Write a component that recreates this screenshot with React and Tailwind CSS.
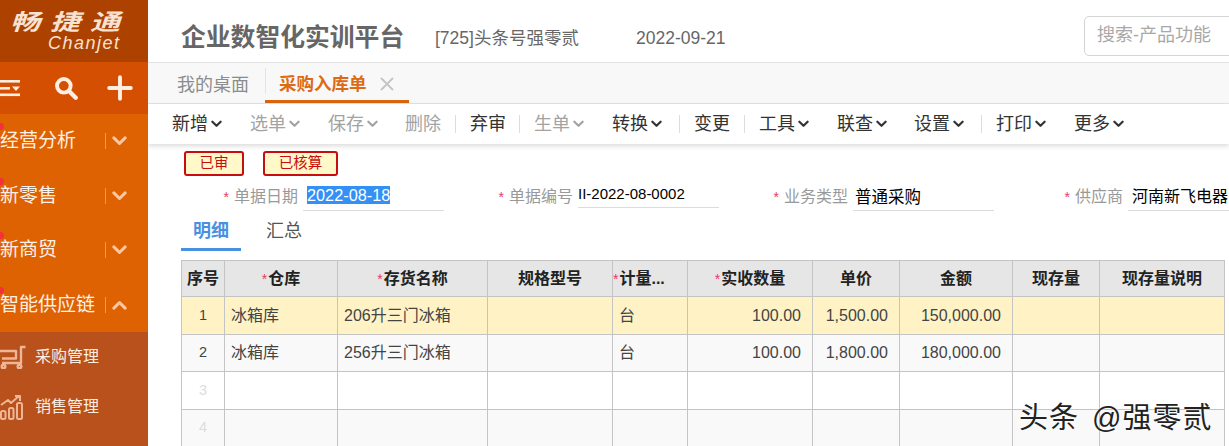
import React from "react";

const cjk = { fontFamily: '"Liberation Sans","Noto Sans CJK SC",sans-serif' };

const Chevron = ({ up, className = "" }) => (
  <svg viewBox="0 0 12 8" className={className} fill="none" stroke="currentColor" strokeWidth="2.4" strokeLinecap="round" strokeLinejoin="round">
    <path d={up ? "M1.5 6.5 6 2l4.5 4.5" : "M1.5 1.5 6 6l4.5-4.5"} />
  </svg>
);

const menu = ["经营分析", "新零售", "新商贸", "智能供应链"];

function Sidebar() {
  return (
    <aside className="w-[148px] h-[446px] shrink-0 overflow-hidden text-white">
      <div className="h-[62px] bg-[#ad4100] flex flex-col items-start pl-[10px] pt-[9px]">
        <div className="text-[30px] leading-[27px] font-bold italic text-[#f8e2d2] tracking-[10px] whitespace-nowrap scale-y-[0.75]">畅捷通</div>
        <div className="ml-[38px] text-[18px] leading-[15px] italic text-[#f8e2d2] tracking-[1.500px]" style={{ fontFamily: '"Liberation Sans",sans-serif' }}>Chanjet</div>
      </div>
      <div className="h-[52px] bg-[#d54f02] flex items-center">
        <svg viewBox="0 0 24 18" className="w-[24px] h-[18px] ml-[-2px] text-[#fdeee2]" fill="currentColor">
          <rect x="0" y="1" width="22" height="2.6" />
          <rect x="0" y="8" width="12" height="2.6" />
          <path d="M14 7.500h8l-4 4.500z" />
          <rect x="0" y="14.500" width="22" height="2.600" />
        </svg>
        <svg viewBox="0 0 24 24" className="w-[26px] h-[26px] ml-[31px] text-[#fdeee2]" fill="none" stroke="currentColor" strokeLinecap="round">
          <circle cx="10" cy="10" r="6.300" strokeWidth="3.600" />
          <path d="M15 15l6 6" strokeWidth="4" />
        </svg>
        <svg viewBox="0 0 24 24" className="w-[26px] h-[26px] ml-[28px] text-[#fdeee2]" fill="none" stroke="currentColor" strokeWidth="3.600" strokeLinecap="round">
          <path d="M12 2v20M2 12h20" />
        </svg>
      </div>
      <div className="bg-[#df6202]">
        {menu.map((m, i) => (
          <div key={m} className="h-[54.500px] flex items-center relative">
            <span className="absolute left-[-3px] top-[9px] w-[7px] h-[7px] rounded-full bg-[#f5303a]" />
            <span className="text-[19px] whitespace-nowrap w-[105px] text-[#fdf0e6]">{m}</span>
            <span className="h-[16px] w-px bg-[#ec9a5c]" />
            <Chevron up={i === 3} className="w-[15px] h-[10px] ml-[6px] text-[#f7c8a3]" />
          </div>
        ))}
      </div>
      <div className="bg-[#b8511c] h-[114px]">
        <div className="h-[50px] flex items-center">
          <svg viewBox="0 0 26 24" className="w-[26px] h-[24px] text-[#eeb597]" fill="none" stroke="currentColor" strokeWidth="2.400" strokeLinejoin="round">
            <path d="M25.500 2h-4.500v16H2" />
            <path d="M0 6h16v7.500H2" />
            <circle cx="3.500" cy="21.500" r="1.800" />
            <circle cx="19.500" cy="21.500" r="1.800" />
          </svg>
          <span className="ml-[9px] text-[16px] text-[#fdeee2] whitespace-nowrap">采购管理</span>
        </div>
        <div className="h-[50px] flex items-center">
          <svg viewBox="0 0 26 26" className="w-[26px] h-[26px] ml-[-1px] text-[#eeb597]" fill="none" stroke="currentColor" strokeWidth="2" strokeLinejoin="round">
            <rect x="2" y="17" width="4.500" height="8" rx="1.500" />
            <rect x="10" y="14" width="4.500" height="11" rx="1.500" />
            <rect x="18" y="9" width="5" height="16" rx="1.500" />
            <path d="M2 11l7-5 3 3 8-7M16 2h5v5" />
          </svg>
          <span className="ml-[10px] text-[16px] text-[#fdeee2] whitespace-nowrap">销售管理</span>
        </div>
      </div>
    </aside>
  );
}

const tools = [
  { t: "新增", c: 1, w: 78 },
  { t: "选单", c: 1, g: 1, w: 78 },
  { t: "保存", c: 1, g: 1, w: 77 },
  { t: "删除", g: 1, s: 1, w: 65 },
  { t: "弃审", s: 1, w: 64 },
  { t: "生单", c: 1, g: 1, w: 78 },
  { t: "转换", c: 1, s: 1, w: 82 },
  { t: "变更", s: 1, w: 65 },
  { t: "工具", c: 1, w: 78 },
  { t: "联查", c: 1, w: 77 },
  { t: "设置", c: 1, s: 1, w: 82 },
  { t: "打印", c: 1, w: 78 },
  { t: "更多", c: 1, w: 60 },
];

function Toolbar() {
  return (
    <div className="h-[40px] bg-white flex items-center pl-[24px] shadow-[0_2px_5px_rgba(0,0,0,0.15)] relative">
      {tools.map((x) => (
        <div key={x.t} className="flex items-center shrink-0 relative" style={{ width: x.w }}>
          <span className={`text-[18px] whitespace-nowrap ${x.g ? "text-[#a3a3a3]" : "text-[#333333]"}`}>{x.t}</span>
          {x.c && <Chevron className={`w-[11px] h-[8px] ml-[3px] ${x.g ? "text-[#a3a3a3]" : "text-[#333333]"}`} />}
          {x.s && <span className="absolute right-[14px] h-[18px] w-px bg-[#dddddd]" />}
        </div>
      ))}
    </div>
  );
}

const Field = ({ label, value, labelW, pl = 0, pt = 2, h = 30, size, selected }) => (
  <div className="flex items-start shrink-0">
    <div className="text-right text-[16px] text-[#999999] whitespace-nowrap pr-[5px] leading-[26px] pt-[3px]" style={{ width: labelW }}>
      <span className="text-[#e8386a] text-[14px] mr-[5px]">*</span>{label}
    </div>
    <div className="w-[141px] border-b border-[#dcdcdc] overflow-hidden whitespace-nowrap text-black leading-[24px]" style={{ height: h, paddingLeft: pl, paddingTop: pt, fontSize: size }}>
      {selected ? <span className="bg-[#3390f4] text-white">{value}</span> : value}
    </div>
  </div>
);

const cols = [43, 113, 150, 125, 75, 125, 87, 113, 87, 125];
const heads = [
  ["序号"], ["仓库", 1], ["存货名称", 1], ["规格型号"], ["计量...", 1], ["实收数量", 1], ["单价"], ["金额"], ["现存量"], ["现存量说明"],
];
const rows = [
  { n: "1", bg: "bg-[#fff3c6]", c: ["冰箱库", "206升三门冰箱", "", "台", "100.00", "1,500.00", "150,000.00", "", ""], h: "h-[38px]" },
  { n: "2", bg: "bg-[#f9f9f9]", c: ["冰箱库", "256升三门冰箱", "", "台", "100.00", "1,800.00", "180,000.00", "", ""], h: "h-[37px]" },
  { n: "3", bg: "bg-white", c: ["", "", "", "", "", "", "", "", ""], h: "h-[38px]", mute: 1 },
  { n: "4", bg: "bg-[#f9f9f9]", c: ["", "", "", "", "", "", "", "", ""], h: "h-[37px]", mute: 1 },
];

function DataTable() {
  return (
    <table className="table-fixed border-collapse ml-[33px] mt-[9px] w-[1043px] text-[16px]">
      <colgroup>
        {cols.map((w, i) => <col key={i} style={{ width: w }} />)}
      </colgroup>
      <thead>
        <tr className="h-[36px] bg-[#e6e6e6]">
          {heads.map(([h, req], i) => (
            <th key={i} className={`border border-[#c4c4c4] font-bold text-[#222222] whitespace-nowrap p-0 ${i === 4 ? "text-left" : "text-center"}`}>
              {req && <span className="text-[#e8386a] font-normal text-[14px] mr-[1px]">*</span>}{h}
            </th>
          ))}
        </tr>
      </thead>
      <tbody>
        {rows.map((r) => (
          <tr key={r.n} className={`${r.h} ${r.bg}`}>
            <td className={`border border-[#c4c4c4] text-center p-0 text-[14.500px] ${r.mute ? "text-[#dddddd]" : "text-[#444444]"}`}>{r.n}</td>
            {r.c.map((v, i) => (
              <td key={i} className={`border border-[#c4c4c4] text-[#444444] whitespace-nowrap py-0 ${i >= 4 ? "text-right pr-[11px] pl-0" : "pl-[6px] pr-0"}`}>{v}</td>
            ))}
          </tr>
        ))}
      </tbody>
    </table>
  );
}

export default function App() {
  return (
    <div className="w-[1229px] h-[446px] overflow-hidden flex bg-white relative" style={cjk}>
      <Sidebar />
      <main className="flex-1 min-w-0 overflow-hidden">
        <header className="h-[63px] pt-[14px] flex items-center border-b border-[#e2e2e2] relative">
          <h1 className="ml-[33px] text-[24.800px] font-bold text-[#666666] whitespace-nowrap w-[254px]">企业数智化实训平台</h1>
          <span className="text-[17.500px] text-[#666666] whitespace-nowrap w-[201px]">[725]头条号强零贰</span>
          <span className="text-[17.500px] text-[#666666] whitespace-nowrap">2022-09-21</span>
          <div className="ml-auto -mr-[40px] mb-[5px] w-[185px] h-[40px] border border-[#d4d4d4] rounded-[5px] flex items-center pl-[12px] text-[18px] text-[#a8a8a8] whitespace-nowrap">搜索-产品功能</div>
        </header>
        <div className="h-[41px] bg-[#f8f8f8] border-b border-[#e4e4e4] flex items-end pl-[29px]">
          <span className="h-[40px] w-[88px] text-[18px] text-[#8c8c8c] leading-[44px] whitespace-nowrap">我的桌面</span>
          <div className="relative h-[40px] w-[144px] border-b-[3px] border-[#d9660f] pl-[14px] pt-[5px] flex items-center">
            <span className="absolute left-0 top-[5px] h-[26px] w-px bg-[#e4e4e4]" />
            <span className="text-[17.500px] font-bold text-[#dd6a14] whitespace-nowrap">采购入库单</span>
            <svg viewBox="0 0 14 14" className="w-[14px] h-[14px] ml-[13px] text-[#c4c4c4]" fill="none" stroke="currentColor" strokeWidth="1.800"><path d="M1 1l12 12M13 1 1 13" /></svg>
          </div>
        </div>
        <Toolbar />
        <div className="flex ml-[36px] mt-[7px] gap-[19px]">
          {[["已审", 60], ["已核算", 75]].map(([t, w]) => (
            <span key={t} className="h-[25px] border-2 border-[#c70d0d] rounded-[3px] bg-[#fff8c8] text-[#c70d0d] text-[14.500px] flex items-center justify-center" style={{ width: w }}>{t}</span>
          ))}
        </div>
        <div className="flex mt-[5px] ml-[33px]">
          <Field label="单据日期" value="2022-08-18" labelW={122} pl={4} pt={2} size={16.3} selected />
          <Field label="单据编号" value="II-2022-08-0002" labelW={134} pt={1} h={27} size={15} />
          <Field label="业务类型" value="普通采购" labelW={134} pl={2} pt={4} size={16.5} />
          <Field label="供应商" value="河南新飞电器" labelW={134} pl={4} pt={4} size={16} />
        </div>
        <div className="flex ml-[33px] mt-[5px] h-[35px]">
          <div className="w-[60px] h-[35px] border-b-[3px] border-[#4a90e2] text-center text-[18px] font-bold text-[#4a90e2] leading-[31px]">明细</div>
          <div className="ml-[25px] text-[18px] text-[#555555] leading-[31px]">汇总</div>
        </div>
        <DataTable />
      </main>
      <div className="absolute left-[1019px] top-[401px] text-[29px] leading-[34px] tracking-[1px] [word-spacing:4px] text-[#222222] whitespace-nowrap [text-shadow:0_0_2px_#fff]">头条 @强零贰</div>
    </div>
  );
}
